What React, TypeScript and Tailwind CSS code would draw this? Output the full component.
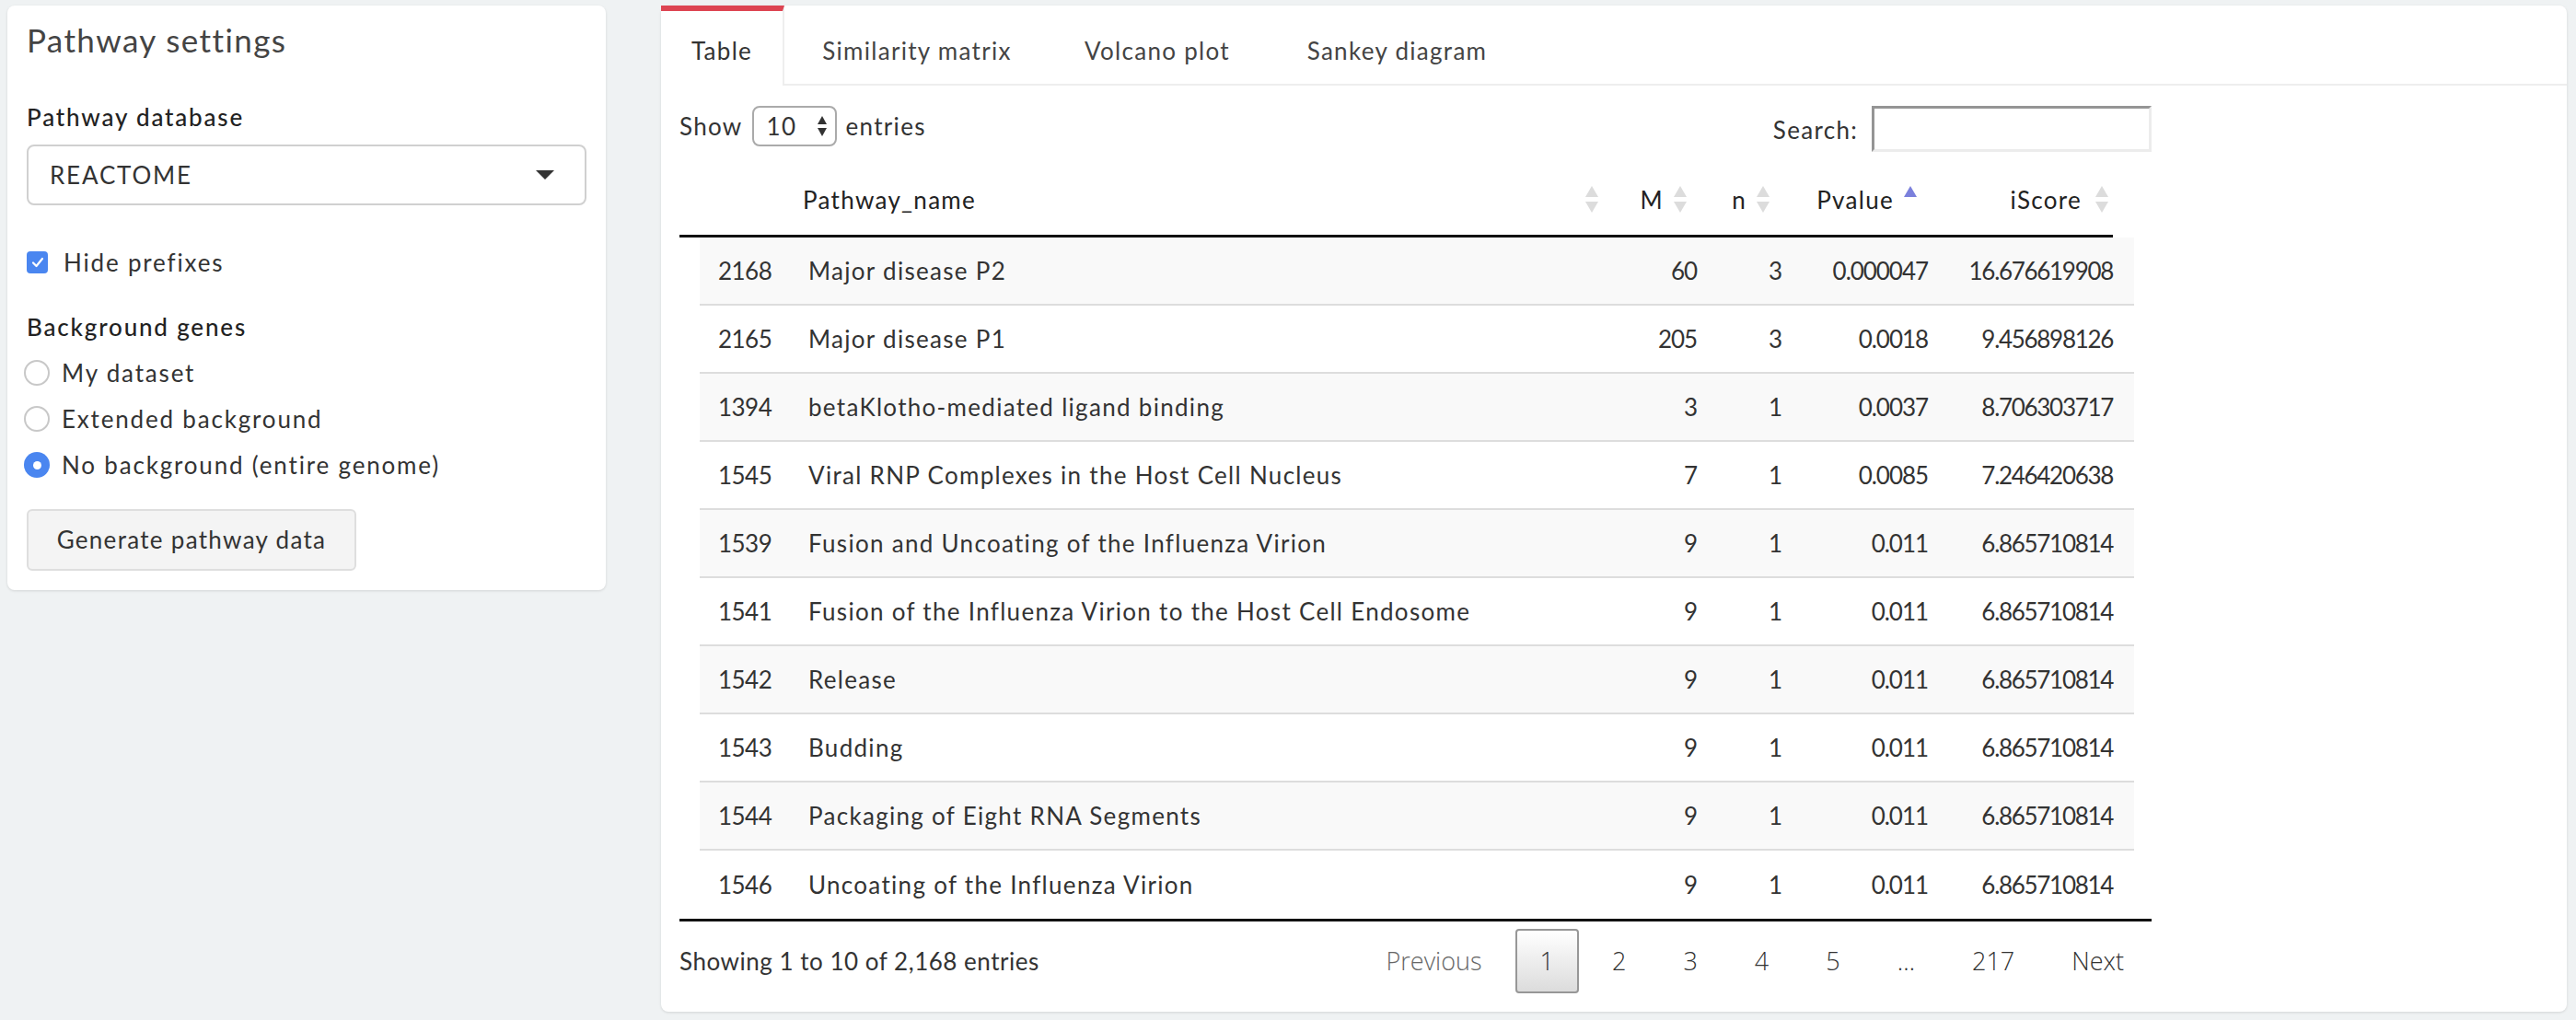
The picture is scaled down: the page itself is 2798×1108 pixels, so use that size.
import React from 'react'

const ROWS: string[][] = [
  ['2168', 'Major disease P2', '60', '3', '0.000047', '16.676619908'],
  ['2165', 'Major disease P1', '205', '3', '0.0018', '9.456898126'],
  ['1394', 'betaKlotho-mediated ligand binding', '3', '1', '0.0037', '8.706303717'],
  ['1545', 'Viral RNP Complexes in the Host Cell Nucleus', '7', '1', '0.0085', '7.246420638'],
  ['1539', 'Fusion and Uncoating of the Influenza Virion', '9', '1', '0.011', '6.865710814'],
  ['1541', 'Fusion of the Influenza Virion to the Host Cell Endosome', '9', '1', '0.011', '6.865710814'],
  ['1542', 'Release', '9', '1', '0.011', '6.865710814'],
  ['1543', 'Budding', '9', '1', '0.011', '6.865710814'],
  ['1544', 'Packaging of Eight RNA Segments', '9', '1', '0.011', '6.865710814'],
  ['1546', 'Uncoating of the Influenza Virion', '9', '1', '0.011', '6.865710814'],
]

const TABS = [
  { label: 'Table', w: 'w-[134px]' },
  { label: 'Similarity matrix', w: 'w-[288px]' },
  { label: 'Volcano plot', w: 'w-[234px]' },
  { label: 'Sankey diagram', w: 'w-[287px]' },
]

function SortIcon() {
  return (
    <svg width="16" height="30" viewBox="0 0 16 30" className="shrink-0">
      <polygon points="8,0 15,12 1,12" fill="#dcdcdc" />
      <polygon points="1,17 15,17 8,29" fill="#dcdcdc" />
    </svg>
  )
}

function SortUp() {
  return (
    <svg width="16" height="30" viewBox="0 0 16 30" className="shrink-0">
      <polygon points="8,0 15,12 1,12" fill="#7b80dc" />
    </svg>
  )
}

function Radio({ checked, label }: { checked?: boolean; label: string }) {
  return (
    <div className="flex items-center h-[36px]">
      {checked ? (
        <span className="ml-[-3px] w-[28px] h-[28px] rounded-full bg-[#4a86f0] flex items-center justify-center">
          <span className="w-[9px] h-[9px] rounded-full bg-white" />
        </span>
      ) : (
        <span className="ml-[-3px] w-[28px] h-[28px] rounded-full border-2 border-[#c8c8c8] bg-white" />
      )}
      <span className="ml-[13px]">{label}</span>
    </div>
  )
}

export default function App() {
  return (
    <div className="min-h-screen bg-[#eff2f3] pt-[6px] pl-[8px] pr-[10px] flex items-start gap-[60px] font-['Lato',sans-serif] text-[26px] text-[#333] tracking-[0.05em]">
      {/* Sidebar */}
      <aside className="w-[650px] shrink-0 bg-white rounded-[8px] shadow-[0_1px_3px_rgba(0,0,0,0.12)] pt-[16px] pb-[21px] px-[21px] tracking-[0.07em]">
        <h2 className="text-[35px] leading-[42px] text-[#444] tracking-[0.04em]">Pathway settings</h2>
        <p className="mt-[45px] leading-[36px] font-medium text-[#222]">Pathway database</p>
        <div className="mt-[12px] w-[608px] h-[66px] border-2 border-[#d0d0d0] rounded-[8px] flex items-center justify-between pl-[23px] pr-[33px]">
          <span>REACTOME</span>
          <svg width="20" height="10" viewBox="0 0 20 10">
            <polygon points="0,0 20,0 10,10" fill="#333" />
          </svg>
        </div>
        <div className="mt-[44px] flex items-center h-[36px]">
          <span className="w-[23px] h-[24px] rounded-[4px] bg-[#4a86f0] flex items-center justify-center">
            <svg width="14" height="12" viewBox="0 0 14 12">
              <path d="M2 6.5 L5.5 10 L12 2" stroke="white" strokeWidth="2.2" fill="none" strokeLinecap="round" strokeLinejoin="round" />
            </svg>
          </span>
          <span className="ml-[17px]">Hide prefixes</span>
        </div>
        <p className="mt-[34px] leading-[36px] font-medium text-[#222]">Background genes</p>
        <div className="mt-[14px] flex flex-col gap-[14px]">
          <Radio label="My dataset" />
          <Radio label="Extended background" />
          <Radio checked label="No background (entire genome)" />
        </div>
        <button className="mt-[30px] h-[67px] w-[358px] bg-[#f4f4f4] border-2 border-[#dedede] rounded-[6px] text-[#333] tracking-[0.05em]">
          Generate pathway data
        </button>
      </aside>

      {/* Main panel */}
      <main className="flex-1 bg-white rounded-[8px] shadow-[0_1px_3px_rgba(0,0,0,0.12)] pb-[20px]">
        {/* Tabs */}
        <div className="flex h-[87px] border-b-2 border-[#eeeeee]">
          {TABS.map((t, i) =>
            i === 0 ? (
              <div key={t.label} className={`${t.w} h-[87px] shrink-0 bg-white border-t-[6px] border-t-[#dd4452] border-r-2 border-r-[#eeeeee] pt-[5px] flex items-center justify-center text-[#333]`}>
                {t.label}
              </div>
            ) : (
              <div key={t.label} className={`${t.w} h-[85px] shrink-0 pt-[13px] flex items-center justify-center text-[#444]`}>
                {t.label}
              </div>
            )
          )}
        </div>

        <div className="ml-[20px] w-[1599px]">
          {/* Length + search */}
          <div className="mt-[22px] flex items-start justify-between">
            <div className="flex items-center h-[44px]">
              <span>Show</span>
              <div className="ml-[10px] w-[92px] h-[44px] border-2 border-[#aaaaaa] rounded-[8px] flex items-center justify-between pl-[14px] pr-[8px]">
                <span>10</span>
                <svg width="12" height="24" viewBox="0 0 12 24">
                  <polygon points="6,1 11,10 1,10" fill="#333" />
                  <polygon points="1,14 11,14 6,23" fill="#333" />
                </svg>
              </div>
              <span className="ml-[10px]">entries</span>
            </div>
            <div className="flex items-center h-[50px]">
              <span className="mt-[2px]">Search:</span>
              <div className="ml-[15px] w-[304px] h-[50px] border-[3px] border-t-[#959595] border-l-[#959595] border-b-[#ececec] border-r-[#ececec] bg-white" />
            </div>
          </div>

          {/* Header */}
          <div className="mt-[14px] w-[1557px] h-[79px] border-b-[3px] border-[#111] flex text-[#222]">
            <div className="w-[114px]" />
            <div className="w-[893px] flex items-center justify-between pl-[20px] pr-[8px]">
              <span>Pathway_name</span>
              <SortIcon />
            </div>
            <div className="w-[96px] flex items-center justify-end gap-[10px] pr-[8px]">
              <span>M</span>
              <SortIcon />
            </div>
            <div className="w-[90px] flex items-center justify-end gap-[10px] pr-[8px]">
              <span>n</span>
              <SortIcon />
            </div>
            <div className="w-[160px] flex items-center justify-end gap-[10px] pr-[8px]">
              <span>Pvalue</span>
              <SortUp />
            </div>
            <div className="w-[204px] flex items-center justify-end gap-[14px] pr-[4px]">
              <span>iScore</span>
              <SortIcon />
            </div>
          </div>

          {/* Body */}
          <div className="ml-[22px] w-[1558px]">
            {ROWS.map((r, i) => (
              <div
                key={r[0]}
                className={`flex h-[74px] items-center ${i % 2 === 0 ? 'bg-[#f9f9f9]' : 'bg-white'} ${i < ROWS.length - 1 ? 'border-b-2 border-[#dddddd]' : 'h-[72px]'}`}
              >
                <div className="w-[98px] pl-[20px] tracking-[-0.02em]">{r[0]}</div>
                <div className="w-[902px] pl-[20px]">{r[1]}</div>
                <div className="w-[93px] pr-[10px] text-right tracking-[-0.04em]">{r[2]}</div>
                <div className="w-[92px] pr-[10px] text-right tracking-[-0.04em]">{r[3]}</div>
                <div className="w-[159px] pr-[10px] text-right tracking-[-0.04em]">{r[4]}</div>
                <div className="w-[214px] pr-[23px] text-right tracking-[-0.05em]">{r[5]}</div>
              </div>
            ))}
          </div>
          <div className="h-[3px] bg-[#111]" />

          {/* Footer */}
          <div className="mt-[8px] h-[70px] flex items-center justify-between">
            <span className="tracking-[0.02em]">Showing 1 to 10 of 2,168 entries</span>
            <div className="flex items-center h-[70px] font-['Open_Sans',sans-serif] font-light text-[27px] tracking-normal text-[#333]">
              <span className="px-[26px] text-[#666]">Previous</span>
              <span className="ml-[10px] h-[70px] px-[25px] flex items-center border-2 border-[#979797] rounded-[4px] bg-gradient-to-b from-white to-[#dcdcdc]">1</span>
              <span className="ml-[10px] px-[26px]">2</span>
              <span className="ml-[10px] px-[26px]">3</span>
              <span className="ml-[10px] px-[26px]">4</span>
              <span className="ml-[10px] px-[26px]">5</span>
              <span className="ml-[10px] px-[26px]">…</span>
              <span className="ml-[10px] px-[26px]">217</span>
              <span className="ml-[10px] pl-[26px] pr-[30px]">Next</span>
            </div>
          </div>
        </div>
      </main>
    </div>
  )
}
